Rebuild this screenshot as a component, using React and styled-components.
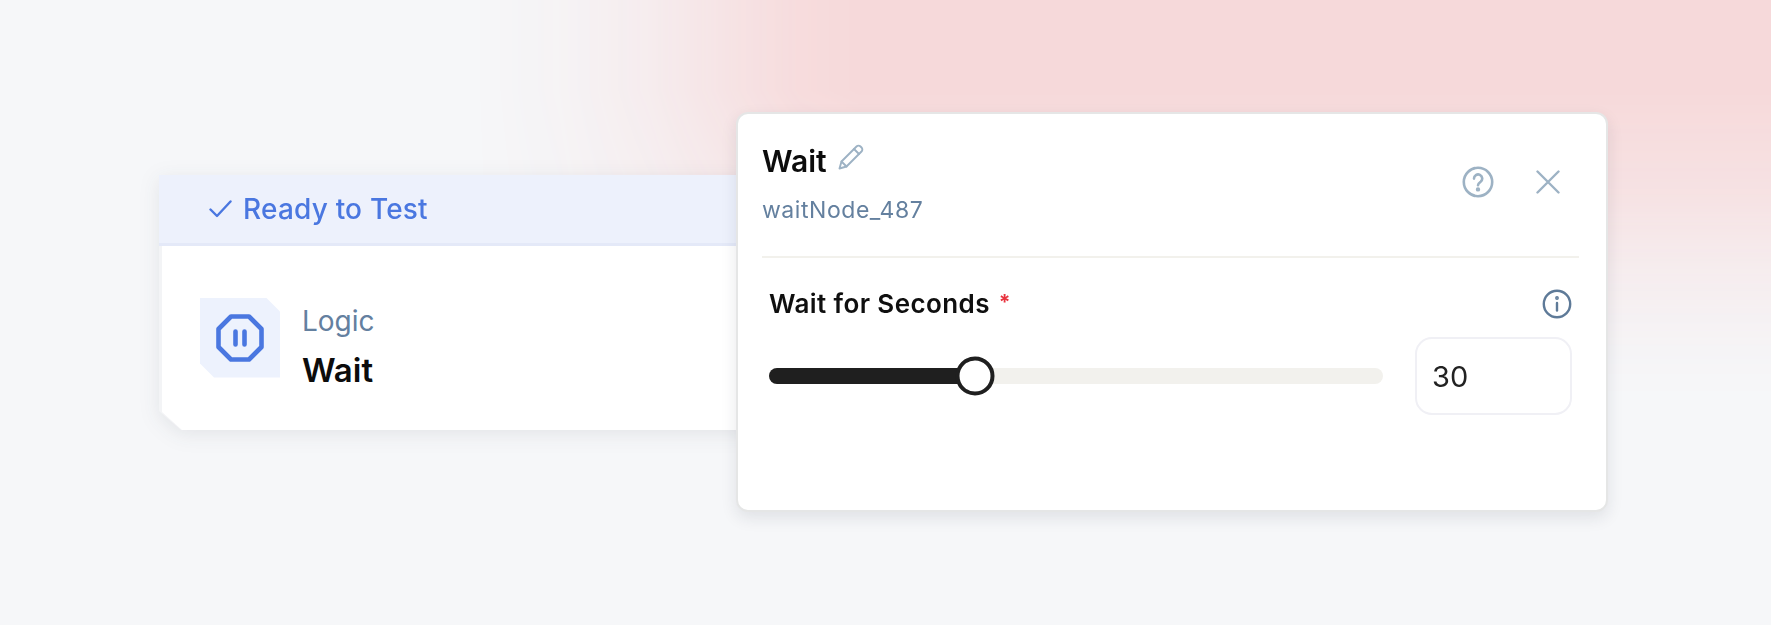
import React from "react";
import styled, { createGlobalStyle } from "styled-components";

const Global = createGlobalStyle`
  html, body { margin: 0; padding: 0; background: #f6f7f9; }
  body { font-family: Inter, "Liberation Sans", sans-serif; overflow: hidden; }
`;

const Stage = styled.main`
  position: relative;
  width: 1771px;
  height: 625px;
  overflow: hidden;
  display: flex;
  align-items: flex-start;
  padding: 112px 0 0 159px;
  box-sizing: border-box;
  background: #f6f7f9;
`;

const Glow = styled.div`
  position: absolute;
  inset: 0;
  background: #f6d9da;
  -webkit-mask-image: linear-gradient(90deg, transparent 470px, rgba(0, 0, 0, 0.12) 560px, rgba(0, 0, 0, 0.36) 650px, rgba(0, 0, 0, 0.7) 740px, rgba(0, 0, 0, 0.92) 800px, #000 860px),
    linear-gradient(180deg, #000 90px, rgba(0, 0, 0, 0.72) 190px, rgba(0, 0, 0, 0.35) 270px, rgba(0, 0, 0, 0.08) 350px, transparent 400px);
  mask-image: linear-gradient(90deg, transparent 470px, rgba(0, 0, 0, 0.12) 560px, rgba(0, 0, 0, 0.36) 650px, rgba(0, 0, 0, 0.7) 740px, rgba(0, 0, 0, 0.92) 800px, #000 860px),
    linear-gradient(180deg, #000 90px, rgba(0, 0, 0, 0.72) 190px, rgba(0, 0, 0, 0.35) 270px, rgba(0, 0, 0, 0.08) 350px, transparent 400px);
  -webkit-mask-composite: source-in;
  mask-composite: intersect;
`;

const NodeShadow = styled.div`
  position: relative;
  margin-top: 63px;
  flex: none;
  width: 590px;
  filter: drop-shadow(0 4px 10px rgba(30, 40, 60, 0.09));
`;

const NodeCard = styled.section`
  height: 255px;
  display: flex;
  flex-direction: column;
  background: #f3f4f6;
  border-radius: 12px 0 0 0;
  clip-path: polygon(0 0, 100% 0, 100% 100%, 22px 100%, 0 236px);
`;

const StatusBar = styled.header`
  height: 68px;
  display: flex;
  align-items: center;
  gap: 11px;
  padding-left: 50px;
  background: #edf1fc;
  border-bottom: 3px solid #e4e9f8;
  color: #4a77e0;
  font-size: 28px;
  font-weight: 500;
  letter-spacing: 0.2px;
`;

const NodeBody = styled.div`
  flex: 1;
  margin-left: 3px;
  display: flex;
  align-items: center;
  gap: 22px;
  padding-left: 38px;
  padding-bottom: 1px;
  background: #fff;
  clip-path: polygon(0 0, 100% 0, 100% 100%, 20px 100%, 0 166px);
`;

const IconTile = styled.div`
  width: 80px;
  height: 80px;
  display: flex;
  align-items: center;
  justify-content: center;
  background: #edf2fd;
  clip-path: polygon(0 0, 66px 0, 80px 14px, 100% 100%, 14px 100%, 0 66px);
`;

const NodeText = styled.div`
  display: flex;
  flex-direction: column;
  gap: 13px;
  padding-top: 18px;
`;

const NodeKind = styled.span`
  color: #64809f;
  font-size: 28px;
  line-height: 33px;
`;

const NodeName = styled.span`
  color: #0c0c0c;
  font-size: 33px;
  font-weight: 600;
  line-height: 38px;
`;

const Panel = styled.section`
  position: relative;
  flex: none;
  margin-left: -13px;
  width: 872px;
  height: 400px;
  box-sizing: border-box;
  padding: 30px 27px 0 24px;
  background: #fff;
  border: 2px solid #e5e6e6;
  border-radius: 12px;
  box-shadow: 0 6px 16px rgba(30, 40, 60, 0.1);
`;

const PanelHead = styled.header`
  display: flex;
  justify-content: space-between;
  padding-bottom: 32px;
  border-bottom: 2px solid #f2f1ec;
`;

const TitleBlock = styled.div`
  display: flex;
  flex-direction: column;
  gap: 18px;
`;

const TitleRow = styled.div`
  display: flex;
  align-items: flex-start;
  gap: 11px;
`;

const Title = styled.h1`
  margin: 0;
  color: #0c0c0c;
  font-size: 30px;
  font-weight: 600;
  line-height: 34px;
`;

const NodeId = styled.span`
  color: #64809f;
  font-size: 23px;
  line-height: 28px;
  letter-spacing: 0.55px;
`;

const HeadActions = styled.div`
  display: flex;
  align-items: center;
  gap: 42px;
  padding-right: 19px;
  margin-top: -5px;
`;

const Field = styled.div`
  padding: 30px 7px 0 7px;
`;

const LabelRow = styled.div`
  display: flex;
  align-items: center;
  justify-content: space-between;
`;

const Label = styled.label`
  color: #0f0f0f;
  font-size: 26px;
  font-weight: 600;
  line-height: 30px;
  letter-spacing: 0.4px;
`;

const Required = styled.span`
  color: #e8343f;
  font-size: 21px;
  font-weight: 700;
  margin-left: 9px;
  vertical-align: 3px;
`;

const SliderRow = styled.div`
  display: flex;
  align-items: center;
  gap: 32px;
  margin-top: 18px;
`;

const Track = styled.div`
  position: relative;
  flex: 1;
  height: 16px;
  border-radius: 8px;
  background: #f2f1ed;
`;

const Fill = styled.div`
  height: 100%;
  border-radius: 8px 0 0 8px;
  background: #1f1f1f;
`;

const Knob = styled.div`
  position: absolute;
  top: 50%;
  width: 39px;
  height: 39px;
  box-sizing: border-box;
  transform: translate(-50%, -50%);
  border: 4px solid #1f1f1f;
  border-radius: 50%;
  background: #fff;
`;

const NumberBox = styled.div`
  flex: none;
  width: 157px;
  height: 78px;
  box-sizing: border-box;
  display: flex;
  align-items: center;
  padding-left: 15px;
  border: 2px solid #f0f0f5;
  border-radius: 17px;
  color: #222;
  font-size: 29px;
`;

const Pause = () => (
  <svg width="50" height="50" viewBox="0 0 50 50" fill="none" stroke="#4a77e0" strokeWidth="4.6" strokeLinejoin="round" strokeLinecap="round">
    <path d="M16 3.5h18L46.5 16v18L34 46.5H16L3.5 34V16z" />
    <path d="M20.5 18.5v13M29.5 18.5v13" />
  </svg>
);

const Check = () => (
  <svg width="23" height="18" viewBox="0 0 23 18" fill="none" stroke="#4a77e0" strokeWidth="2.4" strokeLinecap="round" strokeLinejoin="round">
    <path d="M1.5 9.5l6.5 6.5L21.5 1.5" />
  </svg>
);

const Pencil = () => (
  <svg width="26" height="26" viewBox="0 0 26 26" fill="none" stroke="#9db2c4" strokeWidth="1.9" strokeLinejoin="round" strokeLinecap="round">
    <path d="M1.5 24.5l2-7L18.5 2.5a2.8 2.8 0 0 1 4 0l1 1a2.8 2.8 0 0 1 0 4L8.5 22.5z" />
    <path d="M3.5 17.5l5 5M16 5l5 5" />
  </svg>
);

const Help = () => (
  <svg width="32" height="32" viewBox="0 0 32 32" fill="none" stroke="#9db2c4" strokeWidth="2.6" strokeLinecap="round">
    <circle cx="16" cy="16" r="14.2" />
    <path d="M12 12.6a4.1 4.1 0 1 1 6.6 3.2c-1.5 1.1-2.6 1.8-2.6 3.4" />
    <circle cx="16" cy="23.4" r="0.9" fill="#9db2c4" />
  </svg>
);

const Close = () => (
  <svg width="24" height="24" viewBox="0 0 24 24" fill="none" stroke="#9db2c4" strokeWidth="2.4" strokeLinecap="round">
    <path d="M1.5 1.5l21 21M22.5 1.5l-21 21" />
  </svg>
);

const Info = () => (
  <svg width="30" height="30" viewBox="0 0 30 30" fill="none" stroke="#5e7a98" strokeWidth="2.4" strokeLinecap="round">
    <circle cx="15" cy="15" r="13.2" />
    <path d="M15 14v7.5" />
    <circle cx="15" cy="9" r="0.7" fill="#5e7a98" />
  </svg>
);

export default function App() {
  const pct = 33.5;
  return (
    <>
      <Global />
      <Stage>
        <Glow />
        <NodeShadow>
          <NodeCard>
            <StatusBar>
              <Check />
              Ready to Test
            </StatusBar>
            <NodeBody>
              <IconTile>
                <Pause />
              </IconTile>
              <NodeText>
                <NodeKind>Logic</NodeKind>
                <NodeName>Wait</NodeName>
              </NodeText>
            </NodeBody>
          </NodeCard>
        </NodeShadow>
        <Panel>
          <PanelHead>
            <TitleBlock>
              <TitleRow>
                <Title>Wait</Title>
                <Pencil />
              </TitleRow>
              <NodeId>waitNode_487</NodeId>
            </TitleBlock>
            <HeadActions>
              <Help />
              <Close />
            </HeadActions>
          </PanelHead>
          <Field>
            <LabelRow>
              <Label>
                Wait for Seconds<Required>*</Required>
              </Label>
              <Info />
            </LabelRow>
            <SliderRow>
              <Track>
                <Fill style={{ width: `${pct}%` }} />
                <Knob style={{ left: `${pct}%` }} />
              </Track>
              <NumberBox>30</NumberBox>
            </SliderRow>
          </Field>
        </Panel>
      </Stage>
    </>
  );
}
